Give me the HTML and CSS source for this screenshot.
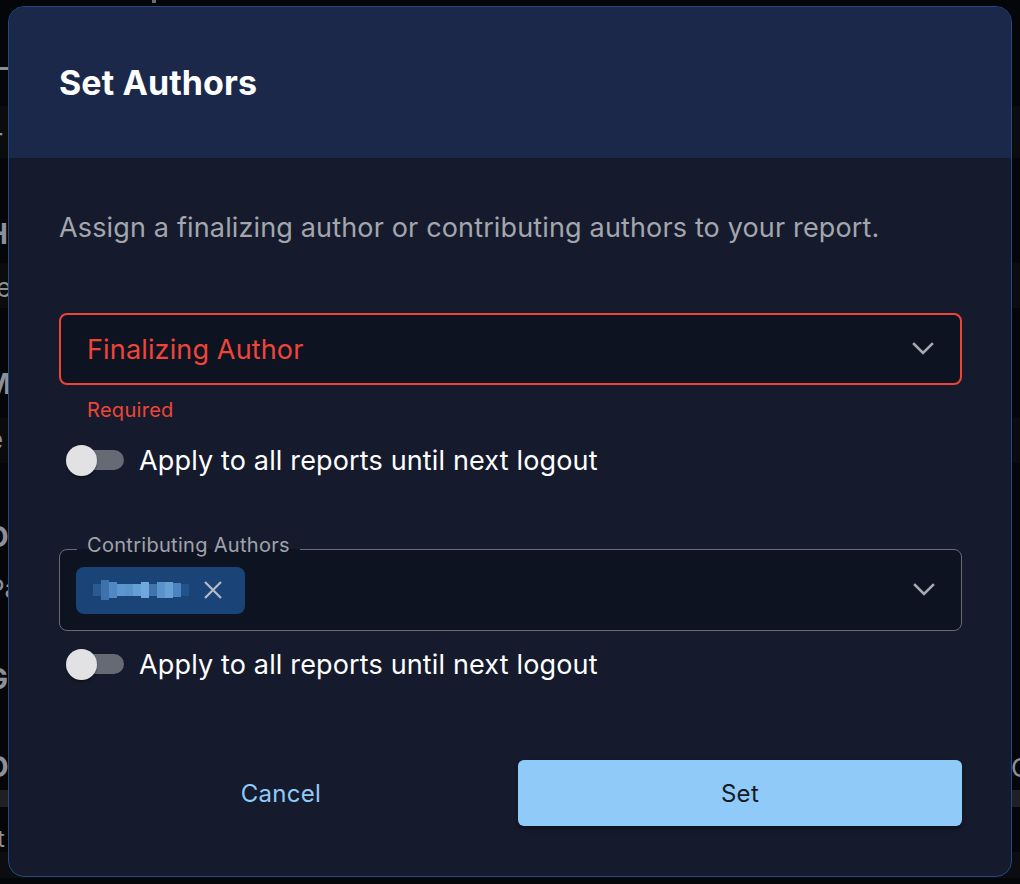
FILE: index.html
```html
<!DOCTYPE html>
<html lang="en">
<head>
<meta charset="utf-8">
<title>Set Authors</title>
<link rel="stylesheet" href="styles.css">
</head>
<body>
<div class="backdrop" aria-hidden="true">
  <div class="band band-1"></div>
  <div class="band band-2"></div>
  <div class="band band-3"></div>
  <div class="band band-4"></div>
  <div class="band band-5"></div>
  <span class="bg-mark bg-top"></span>
  <span class="bg-rule"></span>
  <span class="bg-txt t1">r</span>
  <span class="bg-txt bold t2">H</span>
  <span class="bg-txt t3">le</span>
  <span class="bg-txt bold t4">M</span>
  <span class="bg-txt t5">e</span>
  <span class="bg-txt bold t6">O</span>
  <span class="bg-txt t7">Pa</span>
  <span class="bg-txt bold t8">G</span>
  <span class="bg-txt bold t9">O</span>
  <span class="bg-txt t10">t</span>
  <span class="bg-txt t11">C</span>
</div>

<div class="dialog" role="dialog" aria-labelledby="dlg-title">
  <header class="dialog-header">
    <h2 id="dlg-title" class="dialog-title">Set Authors</h2>
  </header>
  <div class="dialog-body">
    <p class="description">Assign a finalizing author or contributing authors to your report.</p>

    <div class="select select-error">
      <span class="select-label">Finalizing Author</span>
      <svg class="chevron" viewBox="0 0 22 14" width="22" height="14"><polyline points="2,2 11,11 20,2" fill="none" stroke="currentColor" stroke-width="2.6" stroke-linecap="square"/></svg>
    </div>
    <div class="helper-error">Required</div>

    <label class="toggle-row toggle-row-1">
      <span class="switch"><span class="switch-track"></span><span class="switch-knob"></span></span>
      <span class="toggle-text">Apply to all reports until next logout</span>
    </label>

    <div class="field">
      <span class="field-legend">Contributing Authors</span>
      <div class="chip">
        <svg class="chip-name" viewBox="0 0 96 24" width="96" height="24">
          <rect x="0" y="6" width="8" height="12" fill="#2a5a92"/>
          <rect x="8" y="2" width="8" height="20" fill="#3d72ac"/>
          <rect x="16" y="4" width="8" height="16" fill="#5088c3"/>
          <rect x="24" y="6" width="8" height="12" fill="#5e97cf"/>
          <rect x="32" y="6" width="8" height="12" fill="#5a92cb"/>
          <rect x="40" y="6" width="8" height="12" fill="#64a0d4"/>
          <rect x="48" y="4" width="8" height="16" fill="#6ea8dc"/>
          <rect x="56" y="6" width="8" height="12" fill="#3f74ad"/>
          <rect x="64" y="4" width="8" height="16" fill="#5a93cc"/>
          <rect x="72" y="4" width="8" height="16" fill="#68a0d4"/>
          <rect x="80" y="5" width="8" height="14" fill="#4c83bd"/>
          <rect x="88" y="6" width="8" height="12" fill="#23538a"/>
        </svg>
        <svg class="chip-x" viewBox="0 0 20 20" width="20" height="20"><path d="M2 2 L18 18 M18 2 L2 18" stroke="currentColor" stroke-width="2.2" fill="none"/></svg>
      </div>
      <svg class="chevron" viewBox="0 0 22 14" width="22" height="14"><polyline points="2,2 11,11 20,2" fill="none" stroke="currentColor" stroke-width="2.6" stroke-linecap="square"/></svg>
    </div>

    <label class="toggle-row toggle-row-2">
      <span class="switch"><span class="switch-track"></span><span class="switch-knob"></span></span>
      <span class="toggle-text">Apply to all reports until next logout</span>
    </label>

    <div class="actions">
      <button class="btn btn-text" type="button">Cancel</button>
      <button class="btn btn-primary" type="button">Set</button>
    </div>
  </div>
</div>
</body>
</html>
```
FILE: styles.css
```css
html, body {
  margin: 0;
  padding: 0;
}
body {
  width: 1020px;
  height: 884px;
  overflow: hidden;
  background: #040609;
  font-family: Inter, "Noto Sans", "Liberation Sans", sans-serif;
  position: relative;
}

/* page behind the modal */
.backdrop {
  position: absolute;
  inset: 0;
}
.band {
  position: absolute;
  left: 0;
  right: 0;
  background: #0b0c0e;
}
.band-1 { top: 106px; height: 52px; }
.band-2 { top: 263px; height: 45px; }
.band-3 { top: 418px; height: 45px; background: #0a0b0d; }
.band-4 { top: 790px; height: 17px; background: #1e2023; }
.band-5 { top: 852px; height: 26px; background: #0c0d10; }
.bg-mark {
  position: absolute;
  background: #6a6d72;
}
.bg-top { left: 152px; top: 0; width: 4px; height: 3px; }
.bg-rule {
  position: absolute;
  left: 0;
  top: 67px;
  width: 8px;
  height: 3px;
  background: #8a8d92;
}
.bg-txt {
  position: absolute;
  color: #8d9096;
  font-size: 26px;
  line-height: 26px;
  font-family: Inter, "Noto Sans", sans-serif;
}
.bg-txt.bold { font-weight: 700; font-size: 28px; }
.t1 { left: -7px; top: 126px; }
.t2 { left: -13px; top: 221px; }
.t3 { left: -10px; top: 275px; }
.t4 { left: -15px; top: 371px; }
.t5 { left: -12px; top: 427px; }
.t6 { left: -13px; top: 524px; }
.t7 { left: -12px; top: 576px; }
.t8 { left: -13px; top: 666px; }
.t9 { left: -13px; top: 754px; }
.t10 { left: -3px; top: 826px; font-size: 24px; }
.t11 { left: 1011px; top: 755px; }

/* dialog */
.dialog {
  position: absolute;
  left: 8px;
  top: 6px;
  width: 1004px;
  height: 871px;
  box-sizing: border-box;
  border: 1px solid #1f4a86;
  border-radius: 16px;
  background: #151b2c;
  overflow: hidden;
  display: flex;
  flex-direction: column;
}
.dialog-header {
  height: 151px;
  flex: none;
  background: #1b284a;
  display: flex;
  align-items: center;
  padding: 0 50px;
}
.dialog-title {
  margin: 0;
  color: #ffffff;
  font-size: 34px;
  font-weight: 700;
  letter-spacing: 0.1px;
}
.dialog-body {
  padding: 54px 49px 0 50px;
  display: flex;
  flex-direction: column;
}
.description {
  margin: 0;
  color: #a3a6ad;
  font-size: 27px;
  line-height: 32px;
  letter-spacing: 0.15px;
}

/* select */
.select {
  margin-top: 69px;
  height: 72px;
  box-sizing: border-box;
  border-radius: 8px;
  background: #0e1322;
  display: flex;
  align-items: center;
  justify-content: space-between;
  padding: 0 26px 0 26px;
}
.select-error {
  border: 2px solid #ee4337;
}
.select-label {
  color: #ef4538;
  font-size: 27px;
  letter-spacing: 0.15px;
}
.chevron {
  color: #a6a9b0;
  flex: none;
}
.helper-error {
  margin-top: 13px;
  padding-left: 28px;
  color: #ef4538;
  font-size: 20px;
  line-height: 24px;
  letter-spacing: 0.3px;
}

/* toggle */
.toggle-row {
  display: flex;
  align-items: center;
  height: 40px;
  padding-left: 7px;
}
.toggle-row-1 { margin-top: 18px; }
.toggle-row-2 { margin-top: 13px; }
.switch {
  position: relative;
  width: 58px;
  height: 40px;
  flex: none;
  margin-right: 15px;
}
.switch-track {
  position: absolute;
  left: 2px;
  top: 10px;
  width: 56px;
  height: 20px;
  border-radius: 10px;
  background: #666a75;
}
.switch-knob {
  position: absolute;
  left: 0;
  top: 5px;
  width: 31px;
  height: 31px;
  border-radius: 50%;
  background: #e2e1e3;
  box-shadow: 0 2px 2px rgba(0,0,0,0.35);
}
.toggle-text {
  color: #ffffff;
  font-size: 27px;
  letter-spacing: 0.15px;
}

/* contributing authors field */
.field {
  position: relative;
  margin-top: 69px;
  height: 82px;
  box-sizing: border-box;
  border: 1px solid #686b72;
  border-radius: 8px;
  background: #0e1322;
  display: flex;
  align-items: center;
  justify-content: space-between;
  padding: 0 26px 0 16px;
}
.field-legend {
  position: absolute;
  left: 17px;
  top: -17px;
  padding: 0 10px;
  background: linear-gradient(#151b2c 0 16.5px, #0e1322 16.5px);
  color: #a0a3aa;
  font-size: 20px;
  line-height: 24px;
  letter-spacing: 0.3px;
}
.chip {
  height: 47px;
  width: 169px;
  box-sizing: border-box;
  border-radius: 8px;
  background: #1a4377;
  display: flex;
  align-items: center;
  padding: 0 22px 0 17px;
  justify-content: space-between;
}
.chip-name {
  display: block;
  filter: blur(0.7px);
}
.chip-x {
  color: #b3bdca;
}

/* actions */
.actions {
  margin-top: 76px;
  display: grid;
  grid-template-columns: 1fr 1fr;
  gap: 15px;
}
.btn {
  height: 66px;
  border: none;
  border-radius: 6px;
  font-family: Inter, "Noto Sans", "Liberation Sans", sans-serif;
  font-size: 24px;
  letter-spacing: 0.3px;
  cursor: pointer;
}
.btn-text {
  background: transparent;
  color: #90caf9;
}
.btn-primary {
  background: #90caf9;
  color: #141a28;
  box-shadow: 0 3px 4px rgba(0,0,0,0.35);
}
```
